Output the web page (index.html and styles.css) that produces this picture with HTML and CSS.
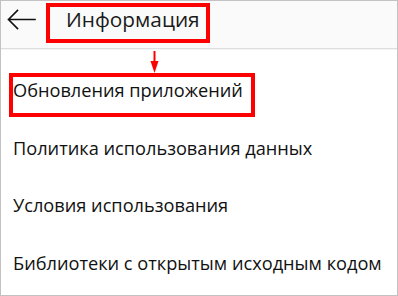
FILE: index.html
```html
<!DOCTYPE html>
<html lang="ru">
<head>
<meta charset="utf-8">
<title>Информация</title>
<link rel="stylesheet" href="styles.css">
</head>
<body>
<div class="frame">
  <header class="header">
    <svg class="back" width="40" height="47" viewBox="0 0 40 47" aria-hidden="true">
      <path d="M34 18.5 H7.5 M16.5 9.5 L7.5 18.5 L16.5 27.5" fill="none" stroke="#111" stroke-width="1.6" stroke-linecap="square"/>
    </svg>
    <h1 class="title"><span class="title-text">Информация</span></h1>
  </header>
  <svg class="pointer" width="12" height="24" viewBox="0 0 12 24" aria-hidden="true">
    <path d="M5.5 1 V13" stroke="#f00" stroke-width="2"/>
    <path d="M1.5 11 H9.5 L5.5 23 Z" fill="#f00"/>
  </svg>
  <ul class="list">
    <li class="item"><span class="highlight">Обновления приложений</span></li>
    <li class="item">Политика использования данных</li>
    <li class="item">Условия использования</li>
    <li class="item">Библиотеки с открытым исходным кодом</li>
  </ul>
</div>
</body>
</html>
```
FILE: styles.css
```css
html, body {
  margin: 0;
  padding: 0;
  background: #fff;
}
.frame {
  position: relative;
  width: 398px;
  height: 296px;
  box-sizing: border-box;
  border: 1px solid #c2c2c2;
  overflow: hidden;
  font-family: "Open Sans", "Noto Sans", sans-serif;
  color: #111;
}
.header {
  display: flex;
  align-items: flex-start;
  height: 47px;
  background: #fafafa;
  border-bottom: 1px solid #dedede;
  box-shadow: 0 1px 1px rgba(0,0,0,0.04);
}
.back {
  display: block;
  flex: none;
}
.title {
  margin: 2px 0 0 5px;
  width: 164px;
  height: 40px;
  box-sizing: border-box;
  border: 4px solid #ff0000;
  padding: 0 0 0 16px;
  font-size: 20.8px;
  font-weight: normal;
  line-height: 24px;
  color: #1a1a1a;
}
.pointer {
  position: absolute;
  left: 148px;
  top: 49px;
}
.list {
  list-style: none;
  margin: 0;
  padding: 13px 0 0;
}
.item {
  display: flex;
  align-items: flex-start;
  height: 57.5px;
  box-sizing: border-box;
  padding: 17.2px 0 0 12px;
  font-size: 18.2px;
  line-height: 22px;
}
.highlight {
  margin: -6.2px 0 0 -4px;
  padding: 2.2px 8px 11.8px 0;
  border: 4px solid #ff0000;
}
```
